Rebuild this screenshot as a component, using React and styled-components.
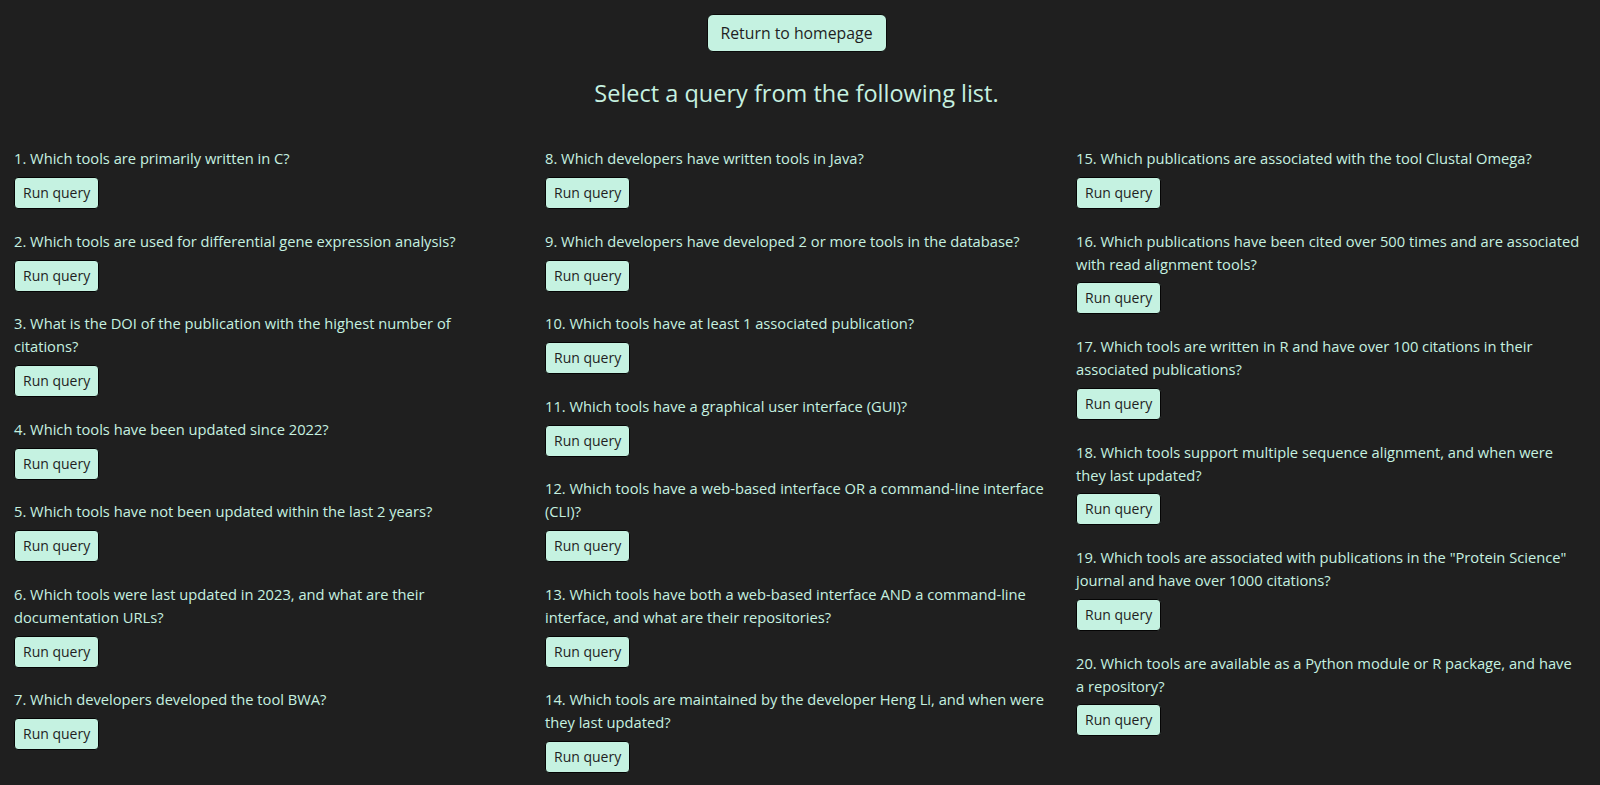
import styled, { createGlobalStyle } from "styled-components";

const GlobalStyle = createGlobalStyle`
  html, body {
    margin: 0;
    padding: 0;
    background-color: #1f1f1f;
  }
  body {
    font-family: "Open Sans", "Noto Sans", sans-serif;
    color: #c6f1e0;
  }
`;

const Page = styled.main`
  display: flex;
  flex-direction: column;
  align-items: center;
  padding: 14px 7px 0 0;
`;

const HomeButton = styled.button`
  font-family: inherit;
  font-size: 15.8px;
  line-height: 22px;
  color: #1f1f1f;
  background-color: #c5f2e1;
  border: 1px solid #0b0b0b;
  border-radius: 6px;
  padding: 7px 13px;
  cursor: pointer;
`;

const Title = styled.h2`
  margin: 25px 0 38px;
  font-size: 23.5px;
  line-height: 32px;
  font-weight: 400;
  color: #c6f1e0;
`;

const QueryGrid = styled.div`
  align-self: stretch;
  display: grid;
  grid-template-columns: repeat(3, 1fr);
  align-items: start;
`;

const Column = styled.ul`
  list-style: none;
  margin: 0;
  padding: 0 14px;

  &:last-child {
    padding-right: 11px;
  }
`;

const QueryItem = styled.li`
  display: flex;
  flex-direction: column;
  align-items: flex-start;
  gap: 7px;
  margin-bottom: 20.7px;
`;

const Question = styled.p`
  margin: 0;
  font-size: 14.7px;
  line-height: 22.9px;
`;

const RunButton = styled.button`
  font-family: inherit;
  font-size: 14px;
  line-height: 20px;
  color: #1f1f1f;
  background-color: #c5f2e1;
  border: 1px solid #050505;
  border-radius: 4px;
  padding: 5px 8px;
  cursor: pointer;
`;

const columns = [
  [
    "Which tools are primarily written in C?",
    "Which tools are used for differential gene expression analysis?",
    "What is the DOI of the publication with the highest number of citations?",
    "Which tools have been updated since 2022?",
    "Which tools have not been updated within the last 2 years?",
    "Which tools were last updated in 2023, and what are their documentation URLs?",
    "Which developers developed the tool BWA?",
  ],
  [
    "Which developers have written tools in Java?",
    "Which developers have developed 2 or more tools in the database?",
    "Which tools have at least 1 associated publication?",
    "Which tools have a graphical user interface (GUI)?",
    "Which tools have a web-based interface OR a command-line interface (CLI)?",
    "Which tools have both a web-based interface AND a command-line interface, and what are their repositories?",
    "Which tools are maintained by the developer Heng Li, and when were they last updated?",
  ],
  [
    "Which publications are associated with the tool Clustal Omega?",
    "Which publications have been cited over 500 times and are associated with read alignment tools?",
    "Which tools are written in R and have over 100 citations in their associated publications?",
    "Which tools support multiple sequence alignment, and when were they last updated?",
    'Which tools are associated with publications in the "Protein Science" journal and have over 1000 citations?',
    "Which tools are available as a Python module or R package, and have a repository?",
  ],
];

export default function App() {
  let n = 0;
  return (
    <>
      <GlobalStyle />
      <Page>
        <HomeButton>Return to homepage</HomeButton>
        <Title>Select a query from the following list.</Title>
        <QueryGrid>
          {columns.map((col, ci) => (
            <Column key={ci}>
              {col.map((q) => {
                n += 1;
                return (
                  <QueryItem key={n}>
                    <Question>
                      {n}. {q}
                    </Question>
                    <RunButton>Run query</RunButton>
                  </QueryItem>
                );
              })}
            </Column>
          ))}
        </QueryGrid>
      </Page>
    </>
  );
}
